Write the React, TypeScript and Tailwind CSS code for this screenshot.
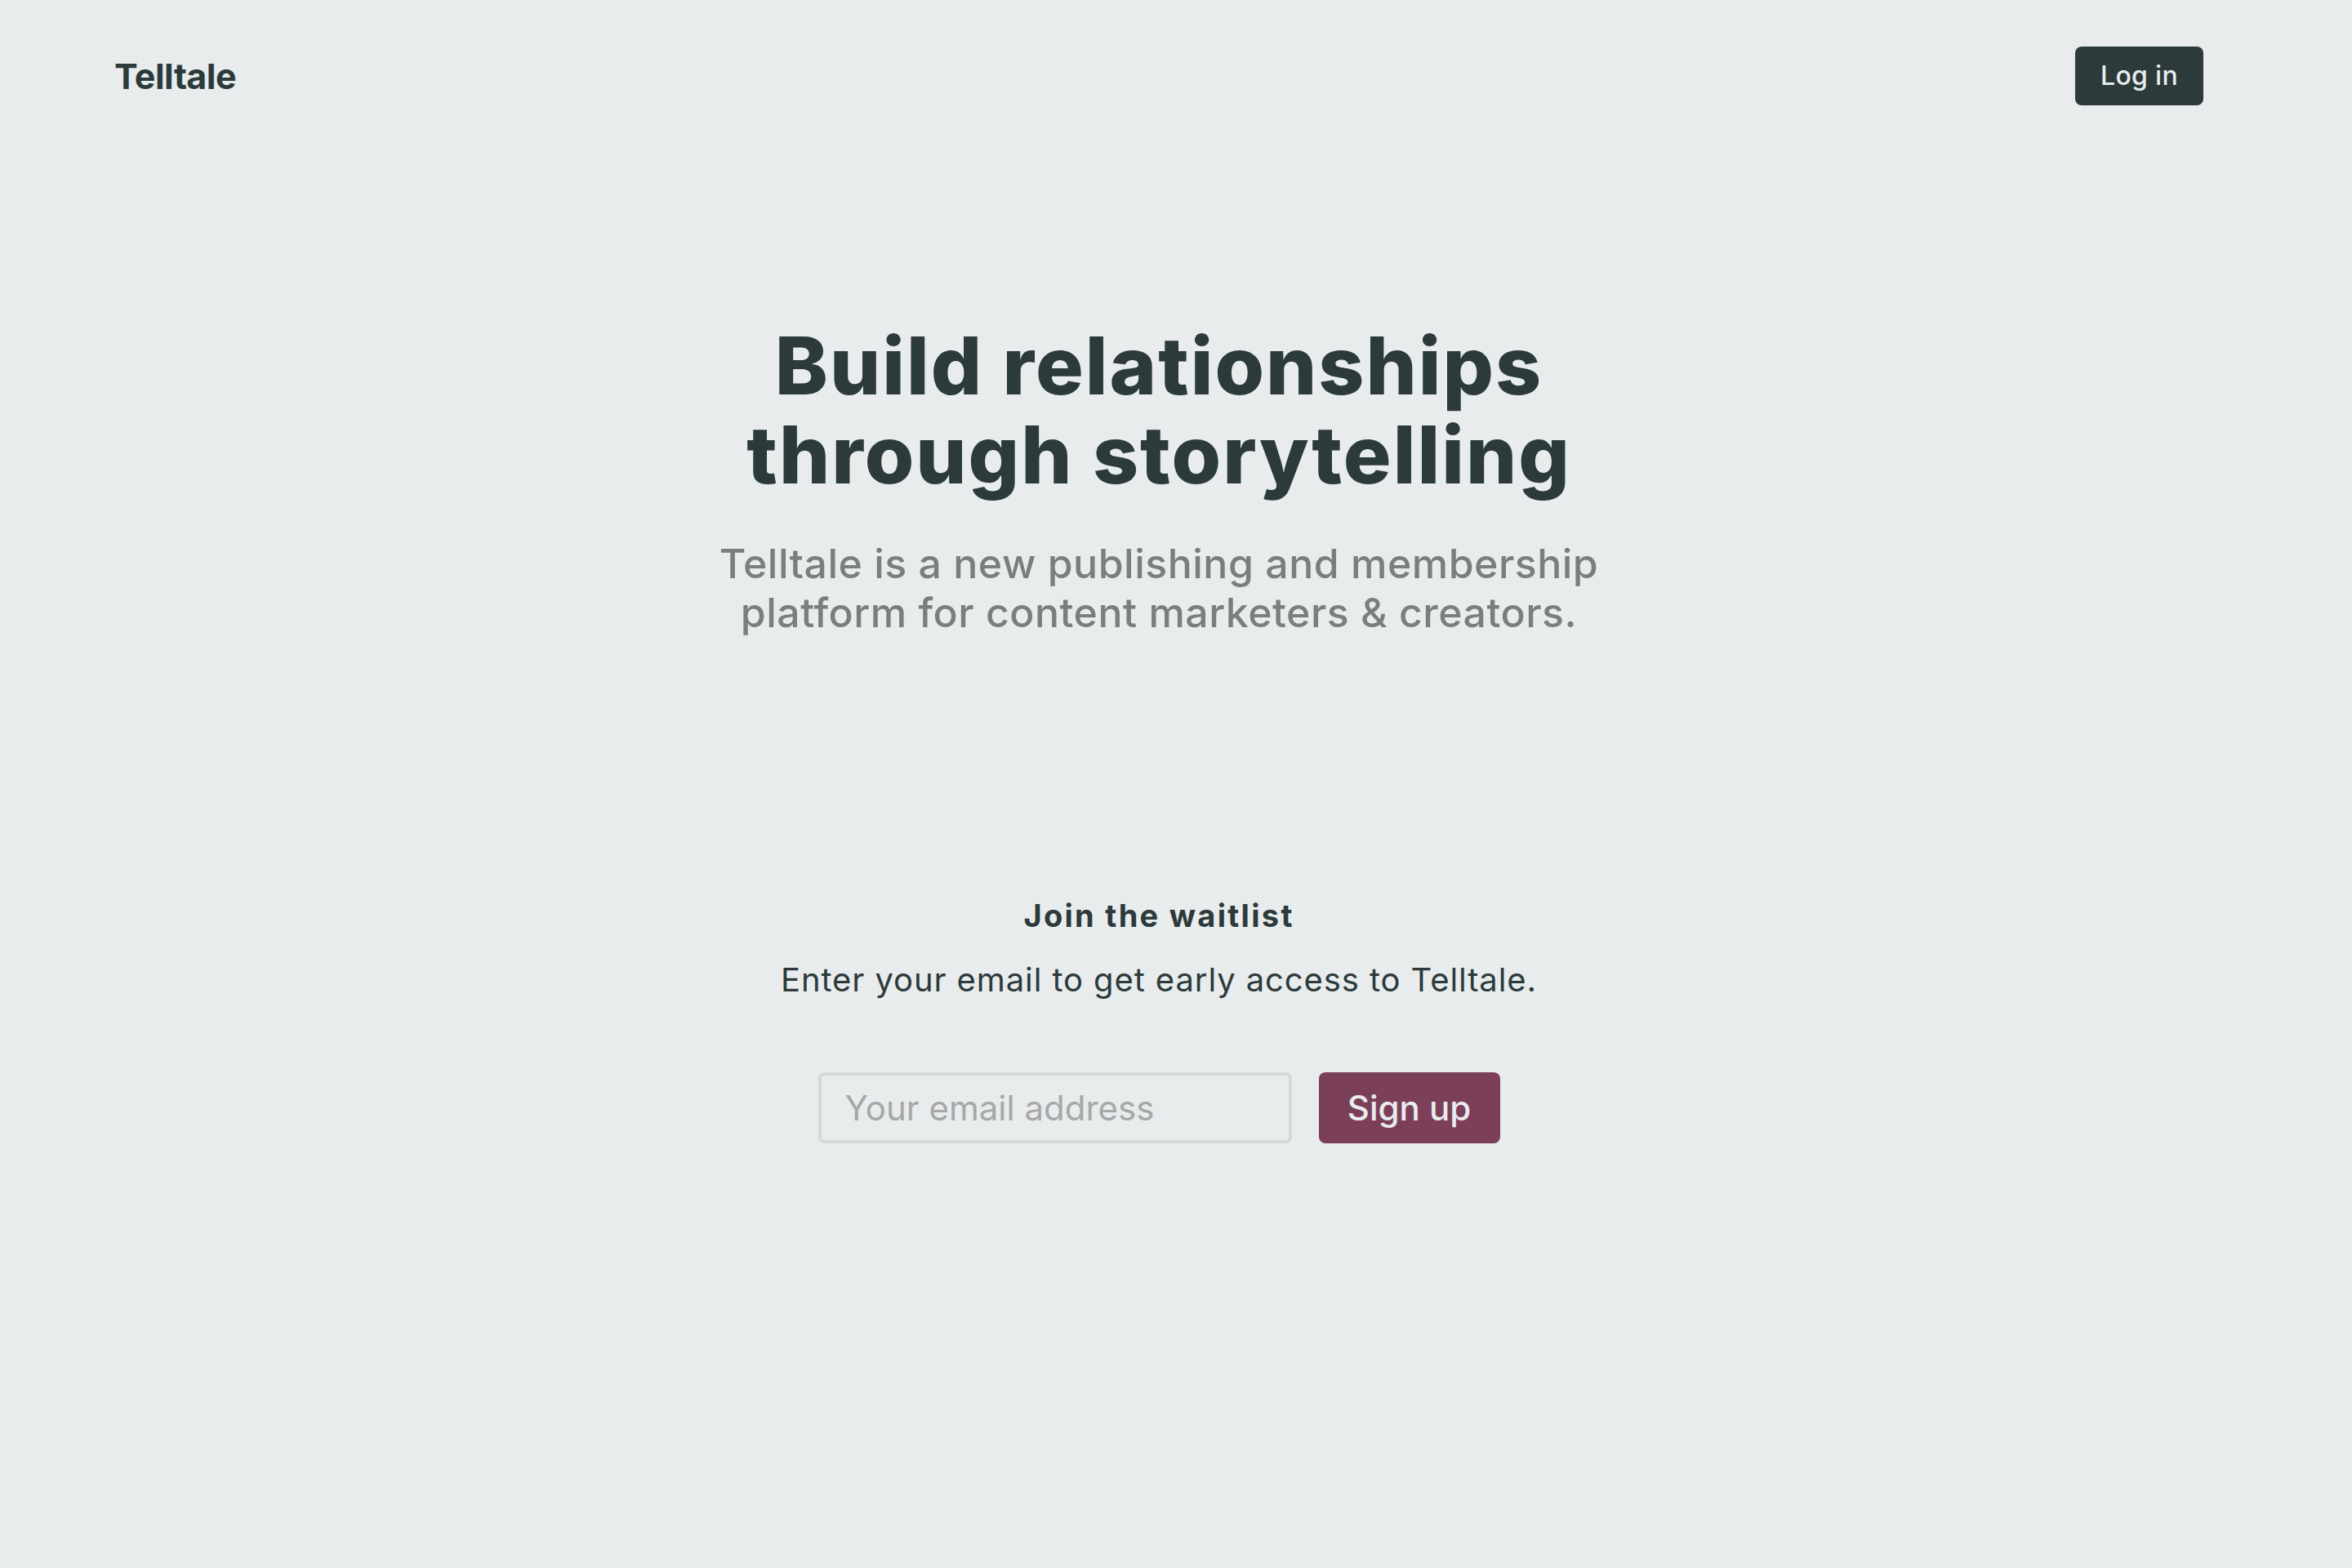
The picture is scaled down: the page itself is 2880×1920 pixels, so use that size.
import React from "react";

export default function App() {
  return (
    <div
      className="min-h-screen w-full bg-[#e8eced] text-[#2c3a3b]"
      style={{ fontFamily: "Inter, 'Noto Sans', sans-serif" }}
    >
      <div className="mr-[42px] flex flex-col">
        <header className="flex items-center justify-between pl-[140px] pr-[140px] pt-[57px]">
          <div className="text-[43px] font-bold leading-none tracking-[-0.5px]">Telltale</div>
          <button className="h-[72px] rounded-[8px] bg-[#2c3a3b] px-[31px] text-[32px] font-medium tracking-[0.3px] text-[#e8eced]">
            Log in
          </button>
        </header>

        <main className="flex flex-col items-center">
          <h1 className="mt-[264px] text-center text-[98px] font-extrabold leading-[109px] tracking-[2px]">
            Build relationships
            <br />
            through storytelling
          </h1>
          <p className="mt-[49px] text-center text-[50px] font-medium leading-[60px] tracking-[0.5px] text-[#787f7f]">
            Telltale is a new publishing and membership
            <br />
            platform for content marketers &amp; creators.
          </p>

          <h2 className="mt-[318px] text-center text-[38px] font-bold leading-[46px] tracking-[2.3px]">
            Join the waitlist
          </h2>
          <p className="mt-[32px] text-center text-[40px] leading-[48px] tracking-[0.9px]">
            Enter your email to get early access to Telltale.
          </p>

          <form className="mt-[89px] flex items-center gap-[33px]" onSubmit={(e) => e.preventDefault()}>
            <input
              type="email"
              placeholder="Your email address"
              className="h-[87px] w-[580px] rounded-[8px] border-[4px] border-[#d3dbd9] bg-[#e8eced] px-[29px] text-[42px] text-[#2c3a3b] outline-none placeholder:text-[#a6a8a8]"
            />
            <button
              type="submit"
              className="h-[87px] w-[222px] rounded-[8px] bg-[#7c3f5a] text-[42px] font-medium text-[#e8eced]"
            >
              Sign up
            </button>
          </form>
        </main>
      </div>
    </div>
  );
}
